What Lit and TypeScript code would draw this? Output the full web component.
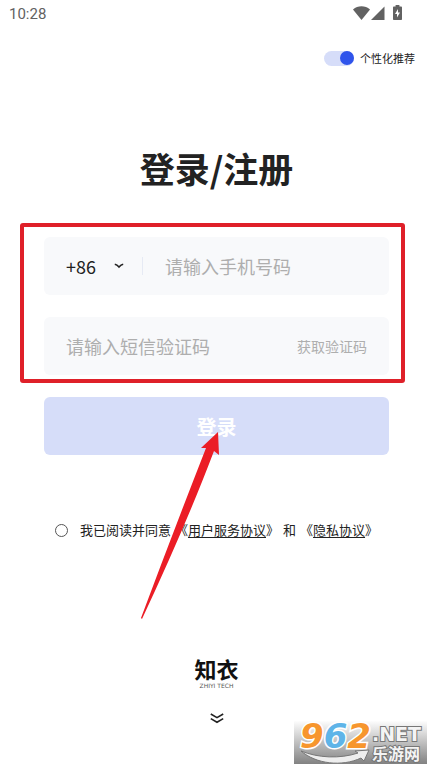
import { LitElement, html, css } from "lit";
import { customElement, state } from "lit/decorators.js";

@customElement("status-bar")
class StatusBar extends LitElement {
  static styles = css`
    :host { display: block; }
    .bar {
      display: flex; align-items: center; justify-content: space-between;
      height: 28px; padding: 0 31px 0 9px; color: #626262;
    }
    .time { font: 400 15px/20px Roboto, sans-serif; }
    .icons { display: flex; align-items: center; padding-bottom: 3px; }
    .battery { margin-left: 8px; }
  `;
  render() {
    return html`<div class="bar">
      <span class="time">10:28</span>
      <div class="icons">
        <svg width="17" height="14" viewBox="0 0 17 14" fill="currentColor" aria-hidden="true"><path d="M0 3.6C4.8-.8 12.2-.8 17 3.6L8.5 14Z" /></svg>
        <svg width="15" height="14" viewBox="0 0 15 14" fill="currentColor" aria-hidden="true"><path d="M1 14 14.5 0.5V14Z" /></svg>
        <svg class="battery" width="9" height="15" viewBox="0 0 9 15" aria-hidden="true">
          <path fill="currentColor" d="M2.6 0h3.8v1.6H8.2a.8.8 0 0 1 .8.8V14.2a.8.8 0 0 1-.8.8H.8a.8.8 0 0 1-.8-.8V2.4a.8.8 0 0 1 .8-.8H2.6Z" />
          <path fill="#fff" d="M5 4 2 9h2v3.6L7 7.6H5Z" />
        </svg>
      </div>
    </div>`;
  }
}

@customElement("site-badge")
class SiteBadge extends LitElement {
  static styles = css`
    :host { display: block; }
    .badge { display: block; overflow: visible; }
    .digits { font: italic 700 34px "DejaVu Sans", sans-serif; stroke: #fff; stroke-width: 3px; paint-order: stroke; }
    .orange { fill: #f7962d; }
    .blue { fill: #5eb4e8; }
    .net { font: 700 19px "DejaVu Sans", sans-serif; }
    .name { font: 700 16px "Noto Sans CJK SC", sans-serif; }
    .pale { fill: #f4f4f4; stroke: #777; stroke-width: 2px; paint-order: stroke; }
  `;
  render() {
    return html`<svg class="badge" width="133" height="43" viewBox="0 0 133 43" role="img" aria-label="962.NET 乐游网">
      <defs><linearGradient id="shade" x1="0" y1="0" x2="0" y2="1">
        <stop offset="0" stop-color="#fdfdfd" /><stop offset="1" stop-color="#828282" />
      </linearGradient></defs>
      <rect width="133" height="43" fill="url(#shade)" />
      <text class="digits" x="6" y="27"><tspan class="orange">9</tspan><tspan class="blue">6</tspan><tspan class="orange">2</tspan></text>
      <path d="M7 30C24 37 46 38 64 32L61 30L75 29L70 40L67 37C48 46 22 43 7 30Z" fill="#eee" stroke="#777" stroke-width="1" />
      <text class="net pale" x="78" y="20">.NET</text>
      <text class="name pale" x="78" y="39">乐游网</text>
    </svg>`;
  }
}

@customElement("app-root")
class AppRoot extends LitElement {
  @state() private personalised = true;
  @state() private agreed = false;

  static styles = css`
    :host {
      display: block; position: relative; min-height: 100vh; background: #fff; color: #222;
      font-family: "Noto Sans CJK SC", sans-serif;
    }
    * { box-sizing: border-box; }
    input, select, button { font: inherit; color: inherit; margin: 0; padding: 0; border: 0; background: none; outline: none; }
    .prefs { display: flex; justify-content: flex-end; padding: 20px 18px 0 0; }
    .pref { display: flex; align-items: center; gap: 6px; font-size: 11px; line-height: 20px; }
    .switch { appearance: none; display: flex; justify-content: flex-end; width: 30px; height: 15px; border-radius: 8px; background: #d6ddf9; }
    .switch::before { content: ""; width: 14px; height: 14px; border-radius: 50%; background: #2f54eb; }
    .switch:not(:checked) { justify-content: flex-start; }
    .title { margin: 74px 0 0; text-align: center; font-size: 35px; line-height: 52px; font-weight: 700; }
    .form { margin: 43px 44px 0; }
    .fields { position: relative; display: grid; gap: 22px; }
    .frame { position: absolute; inset: -14px -16px -8px -24px; border: 4px solid #df2029; border-radius: 3px; pointer-events: none; }
    .field { display: flex; align-items: center; height: 58px; padding: 0 22px; border-radius: 6px; background: #f8f9fb; font-size: 18px; line-height: 26px; }
    .area { display: flex; align-items: center; gap: 18px; }
    .code { appearance: none; width: 30px; }
    .rule { width: 1px; height: 18px; margin: 0 22px 0 18px; background: #e6eaf4; }
    .text { flex: 1; min-width: 0; height: 28px; }
    .text::placeholder { color: #aeaeae; opacity: 1; }
    .send { color: #aeaeae; font-size: 14px; line-height: 20px; }
    .submit-row { position: relative; margin-top: 22px; }
    .submit { display: block; width: 100%; height: 58px; padding-top: 2px; border-radius: 6px; background: #d6ddf9; color: #fff; font-size: 20px; font-weight: 700; line-height: 28px; }
    .arrow { position: absolute; left: calc(50% - 77px); top: 34px; pointer-events: none; }
    .terms { display: flex; justify-content: center; align-items: center; margin-top: 64px; gap: 12px; font-size: 13px; line-height: 22px; }
    .tick { appearance: none; width: 13px; height: 13px; border: 1px solid #555; border-radius: 50%; }
    .tick:checked { background: #2f54eb; }
    .sentence { display: flex; gap: 4px; white-space: nowrap; }
    .link { color: inherit; text-decoration: underline; text-underline-offset: 2px; }
    .brand { display: flex; flex-direction: column; align-items: center; margin-top: 113px; }
    .mark { font-size: 22px; line-height: 28px; font-weight: 700; color: #111; }
    .sub { font: 6px/8px "DejaVu Sans", sans-serif; color: #555; }
    .more { display: flex; margin-top: 23px; }
    .corner { position: absolute; right: 6px; top: 721px; }
  `;

  render() {
    return html`
      <status-bar></status-bar>
      <div class="prefs">
        <label class="pref">
          <input class="switch" type="checkbox" role="switch" .checked=${this.personalised}
            @change=${(e: Event) => (this.personalised = (e.target as HTMLInputElement).checked)} />
          <span>个性化推荐</span>
        </label>
      </div>
      <h1 class="title">登录/注册</h1>
      <form class="form" @submit=${(e: Event) => e.preventDefault()}>
        <div class="fields">
          <div class="field">
            <div class="area">
              <select class="code" aria-label="国家区号"><option>+86</option></select>
              <svg width="10" height="6" viewBox="0 0 10 6" fill="none" stroke="#222" stroke-width="1.6" aria-hidden="true"><path d="M.8 1.2Q3 1.6 5 4Q7 1.6 9.2 1.2" /></svg>
            </div>
            <span class="rule"></span>
            <input class="text" type="tel" aria-label="手机号码" placeholder="请输入手机号码" />
          </div>
          <div class="field">
            <input class="text" type="text" aria-label="短信验证码" placeholder="请输入短信验证码" />
            <button class="send" type="button">获取验证码</button>
          </div>
          <div class="frame"></div>
        </div>
        <div class="submit-row">
          <button class="submit" type="submit">登录</button>
          <svg class="arrow" width="80" height="190" viewBox="0 0 80 190" aria-hidden="true">
            <path fill="#eb1d26" d="M78 1 79 24 74 20Q46 94 2 188L1 187Q32 104 66 17L61 17Z" />
          </svg>
        </div>
      </form>
      <div class="terms">
        <input class="tick" id="agree" type="checkbox" .checked=${this.agreed}
          @change=${(e: Event) => (this.agreed = (e.target as HTMLInputElement).checked)} />
        <div class="sentence">
          <label for="agree">我已阅读并同意</label>
          <span>《<a class="link" href="#service">用户服务协议</a>》</span>
          <span>和</span>
          <span>《<a class="link" href="#privacy">隐私协议</a>》</span>
        </div>
      </div>
      <div class="brand">
        <span class="mark">知衣</span>
        <span class="sub">ZHIYI TECH</span>
        <button class="more" type="button" aria-label="更多">
          <svg width="14" height="11" viewBox="0 0 14 11" fill="none" stroke="#222" stroke-width="1.6" aria-hidden="true"><path d="M.8 1 7 4.6 13.2 1M.8 5.6 7 9.2 13.2 5.6" /></svg>
        </button>
      </div>
      <site-badge class="corner"></site-badge>
    `;
  }
}
